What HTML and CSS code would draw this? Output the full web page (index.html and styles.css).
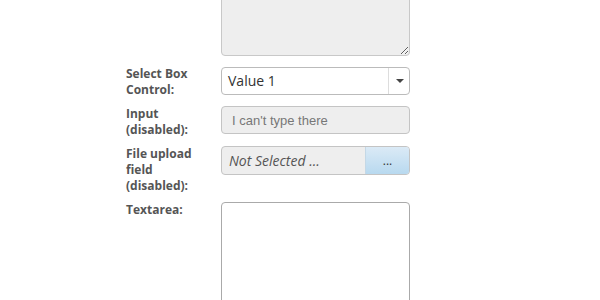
FILE: index.html
```html
<!DOCTYPE html>
<html lang="en">

<head>
    <meta charset="UTF-8">
    <title>Form Controls</title>
    <link rel="stylesheet" href="styles.css">
</head>

<body>

    <div class="container">
        <form class="form">
            <div class="form-row form-row-first">
                <label class="form-label"></label>
                <div class="form-field">
                    <textarea class="textarea textarea-top" disabled></textarea>
                </div>
            </div>

            <div class="form-row">
                <label class="form-label" for="select">Select Box Control:</label>
                <div class="form-field">
                    <div class="select">
                        <span class="select-value">Value 1</span>
                        <span class="select-arrow"></span>
                    </div>
                </div>
            </div>

            <div class="form-row">
                <label class="form-label" for="disabled-input">Input (disabled):</label>
                <div class="form-field">
                    <input type="text" id="disabled-input" class="input" value="I can't type there" disabled>
                </div>
            </div>

            <div class="form-row">
                <label class="form-label">File upload field (disabled):</label>
                <div class="form-field">
                    <div class="file">
                        <span class="file-name">Not Selected ...</span>
                        <span class="file-button">...</span>
                    </div>
                </div>
            </div>

            <div class="form-row">
                <label class="form-label" for="textarea">Textarea:</label>
                <div class="form-field">
                    <textarea id="textarea" class="textarea textarea-bottom"></textarea>
                </div>
            </div>
        </form>
    </div>

</body>

</html>
```

FILE: styles.css
```css
/* Reset some default styles */
* {
    margin: 0;
    padding: 0;
    box-sizing: border-box;
}

body {
    font-family: 'Open Sans', sans-serif;
    background-color: #ffffff;
    color: #555;
    overflow: hidden;
}

.container {
    width: 284px;
    margin: -60px 0 0 126px;
}

.form-row {
    display: flex;
    margin-bottom: 8px;
}

.form-row-first {
    margin-bottom: 10px;
}

.form-label {
    width: 95px;
    flex-shrink: 0;
    padding-right: 10px;
    font-size: 12px;
    font-weight: bold;
    line-height: 16px;
    color: #555;
}

.form-field {
    flex: 1;
}

.textarea {
    display: block;
    width: 100%;
    border: 1px solid #bbb;
    border-radius: 4px;
    font-family: 'Open Sans', sans-serif;
    font-size: 13px;
}

.textarea-top {
    height: 116px;
    background-color: #eee;
    border-color: #c8c8c8;
    resize: vertical;
}

.textarea-bottom {
    height: 160px;
    background-color: #fff;
    border-color: #aaa;
    resize: none;
}

.select {
    display: flex;
    height: 28px;
    border: 1px solid #bbb;
    border-radius: 4px;
    background-color: #fff;
    margin-top: 1px;
}

.select-value {
    flex: 1;
    padding-left: 6px;
    font-size: 14px;
    line-height: 26px;
    color: #333;
}

.select-arrow {
    width: 21px;
    border-left: 1px solid #ddd;
    position: relative;
}

.select-arrow::after {
    content: "";
    position: absolute;
    left: 7px;
    top: 11px;
    border-left: 4px solid transparent;
    border-right: 4px solid transparent;
    border-top: 4px solid #444;
}

.input {
    display: block;
    width: 100%;
    height: 28px;
    padding-left: 10px;
    border: 1px solid #c4c4c4;
    border-radius: 4px;
    background-color: #eee;
    font-family: 'Liberation Sans', Arial, sans-serif;
    font-size: 13px;
    color: #777;
}

.file {
    display: flex;
    height: 29px;
    border: 1px solid #c4c4c4;
    border-radius: 4px;
    background-color: #eee;
    overflow: hidden;
}

.file-name {
    flex: 1;
    padding-left: 7px;
    font-size: 14px;
    font-style: italic;
    line-height: 27px;
    color: #555;
}

.file-button {
    width: 44px;
    border-left: 1px solid #c4d8e6;
    background: linear-gradient(#dbeaf6, #b8d9ef);
    text-align: center;
    font-size: 12px;
    line-height: 27px;
    color: #333;
}
```
